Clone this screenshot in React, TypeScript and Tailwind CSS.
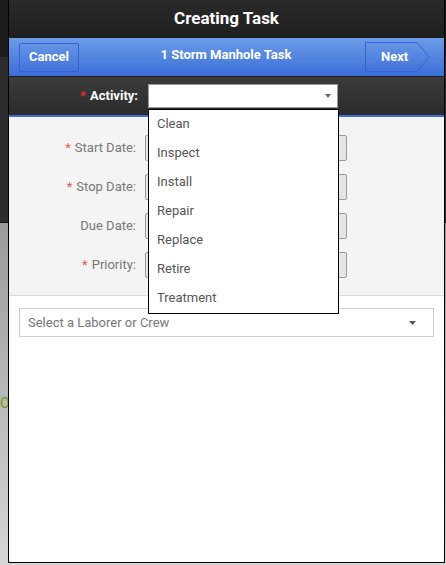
const activities = ["Clean", "Inspect", "Install", "Repair", "Replace", "Retire", "Treatment"];

const fields = [
  { label: "Start Date:", required: true },
  { label: "Stop Date:", required: true },
  { label: "Due Date:", required: false },
  { label: "Priority:", required: true },
];

function Caret({ className }: { className?: string }) {
  return (
    <svg width="7" height="4" viewBox="0 0 7 4" className={className}>
      <polygon points="0,0 7,0 3.5,4" fill="#555" />
    </svg>
  );
}

export default function App() {
  return (
    <div className="relative w-[446px] h-[565px] overflow-hidden font-['Roboto',sans-serif]">
      {/* page behind the dialog */}
      <div className="flex flex-col h-full">
        <div className="h-[57px] bg-[#1b1b1b]" />
        <div className="h-[166px] bg-[#2c2c2c] border-b border-[#111]" />
        <div className="flex-1 bg-gradient-to-b from-[#9a9a9a] to-[#d6d6d6] pt-[170px]">
          <div className="text-[14px] text-[#6a9a20] pl-[0px]">O</div>
        </div>
      </div>

      {/* dialog */}
      <div className="absolute left-[8px] top-0 w-[437px] h-[563px] bg-white border-x border-b border-black flex flex-col">
        <div className="h-[38px] bg-gradient-to-b from-[#2a2a2a] to-[#1e1e1e] flex items-center justify-center">
          <span className="text-white text-[17px] font-bold">Creating Task</span>
        </div>

        <div className="h-[39px] bg-gradient-to-b from-[#6c9ce7] to-[#3d6dd8] border-b border-[#1d1d1d] flex items-center px-[10px]">
          <button className="w-[60px] h-[29px] border border-[#3a5ed4] rounded-[2px] text-white text-[13px] font-bold">
            Cancel
          </button>
          <div className="flex-1 text-center text-white text-[13px] font-bold -mt-[4px] pl-[8px]">1 Storm Manhole Task</div>
          <div className="relative w-[65px] h-[30px] mr-[4px]">
            <svg width="65" height="30" viewBox="0 0 65 30" className="absolute inset-0">
              <polygon points="0.5,0.5 52,0.5 64,15 52,29.5 0.5,29.5" fill="none" stroke="#3a5ed4" strokeWidth="1" />
            </svg>
            <span className="relative flex items-center h-full pl-[16px] text-white text-[13px] font-bold">Next</span>
          </div>
        </div>

        <div className="h-[40px] bg-gradient-to-b from-[#3c3c3c] to-[#2b2b2b] border-b-2 border-[#3d6dd8] flex items-center">
          <div className="w-[129px] text-right text-white text-[13px] font-bold pr-[0px]">
            <span className="text-[#e02a2a] mr-[4px]">*</span>Activity:
          </div>
          <div className="relative ml-[10px] w-[190px] h-[24px] bg-white border border-[#999] flex items-center justify-end pr-[6px] -mt-[1px]">
            <svg width="6" height="4" viewBox="0 0 6 4">
              <polygon points="0,0 6,0 3,4" fill="#666" />
            </svg>
            {/* open list */}
            <div className="absolute left-[-1px] top-[24px] w-[191px] bg-white border border-black z-10 flex flex-col">
              {activities.map((a) => (
                <div key={a} className="h-[29px] flex items-center pl-[8px] text-[13px] text-[#555]">
                  {a}
                </div>
              ))}
            </div>
          </div>
        </div>

        <div className="bg-[#f4f4f4] border-b border-[#dcdcdc] pt-[18px] pb-[17px] flex flex-col gap-[13px]">
          {fields.map((f) => (
            <div key={f.label} className="flex items-center h-[26px]">
              <div className="w-[127px] text-right text-[13px] text-[#777]">
                {f.required && <span className="text-[#e55] mr-[4px]">*</span>}
                {f.label}
              </div>
              <div className="ml-[9px] w-[202px] h-[26px] bg-[#e6e6e6] border border-[#9a9a9a] rounded-[2px]" />
            </div>
          ))}
        </div>

        <div className="px-[10px] pt-[12px]">
          <div className="h-[29px] border border-[#cfcfcf] flex items-center justify-between pl-[8px] pr-[17px]">
            <span className="text-[13px] text-[#777]">Select a Laborer or Crew</span>
            <Caret />
          </div>
        </div>
      </div>
    </div>
  );
}
